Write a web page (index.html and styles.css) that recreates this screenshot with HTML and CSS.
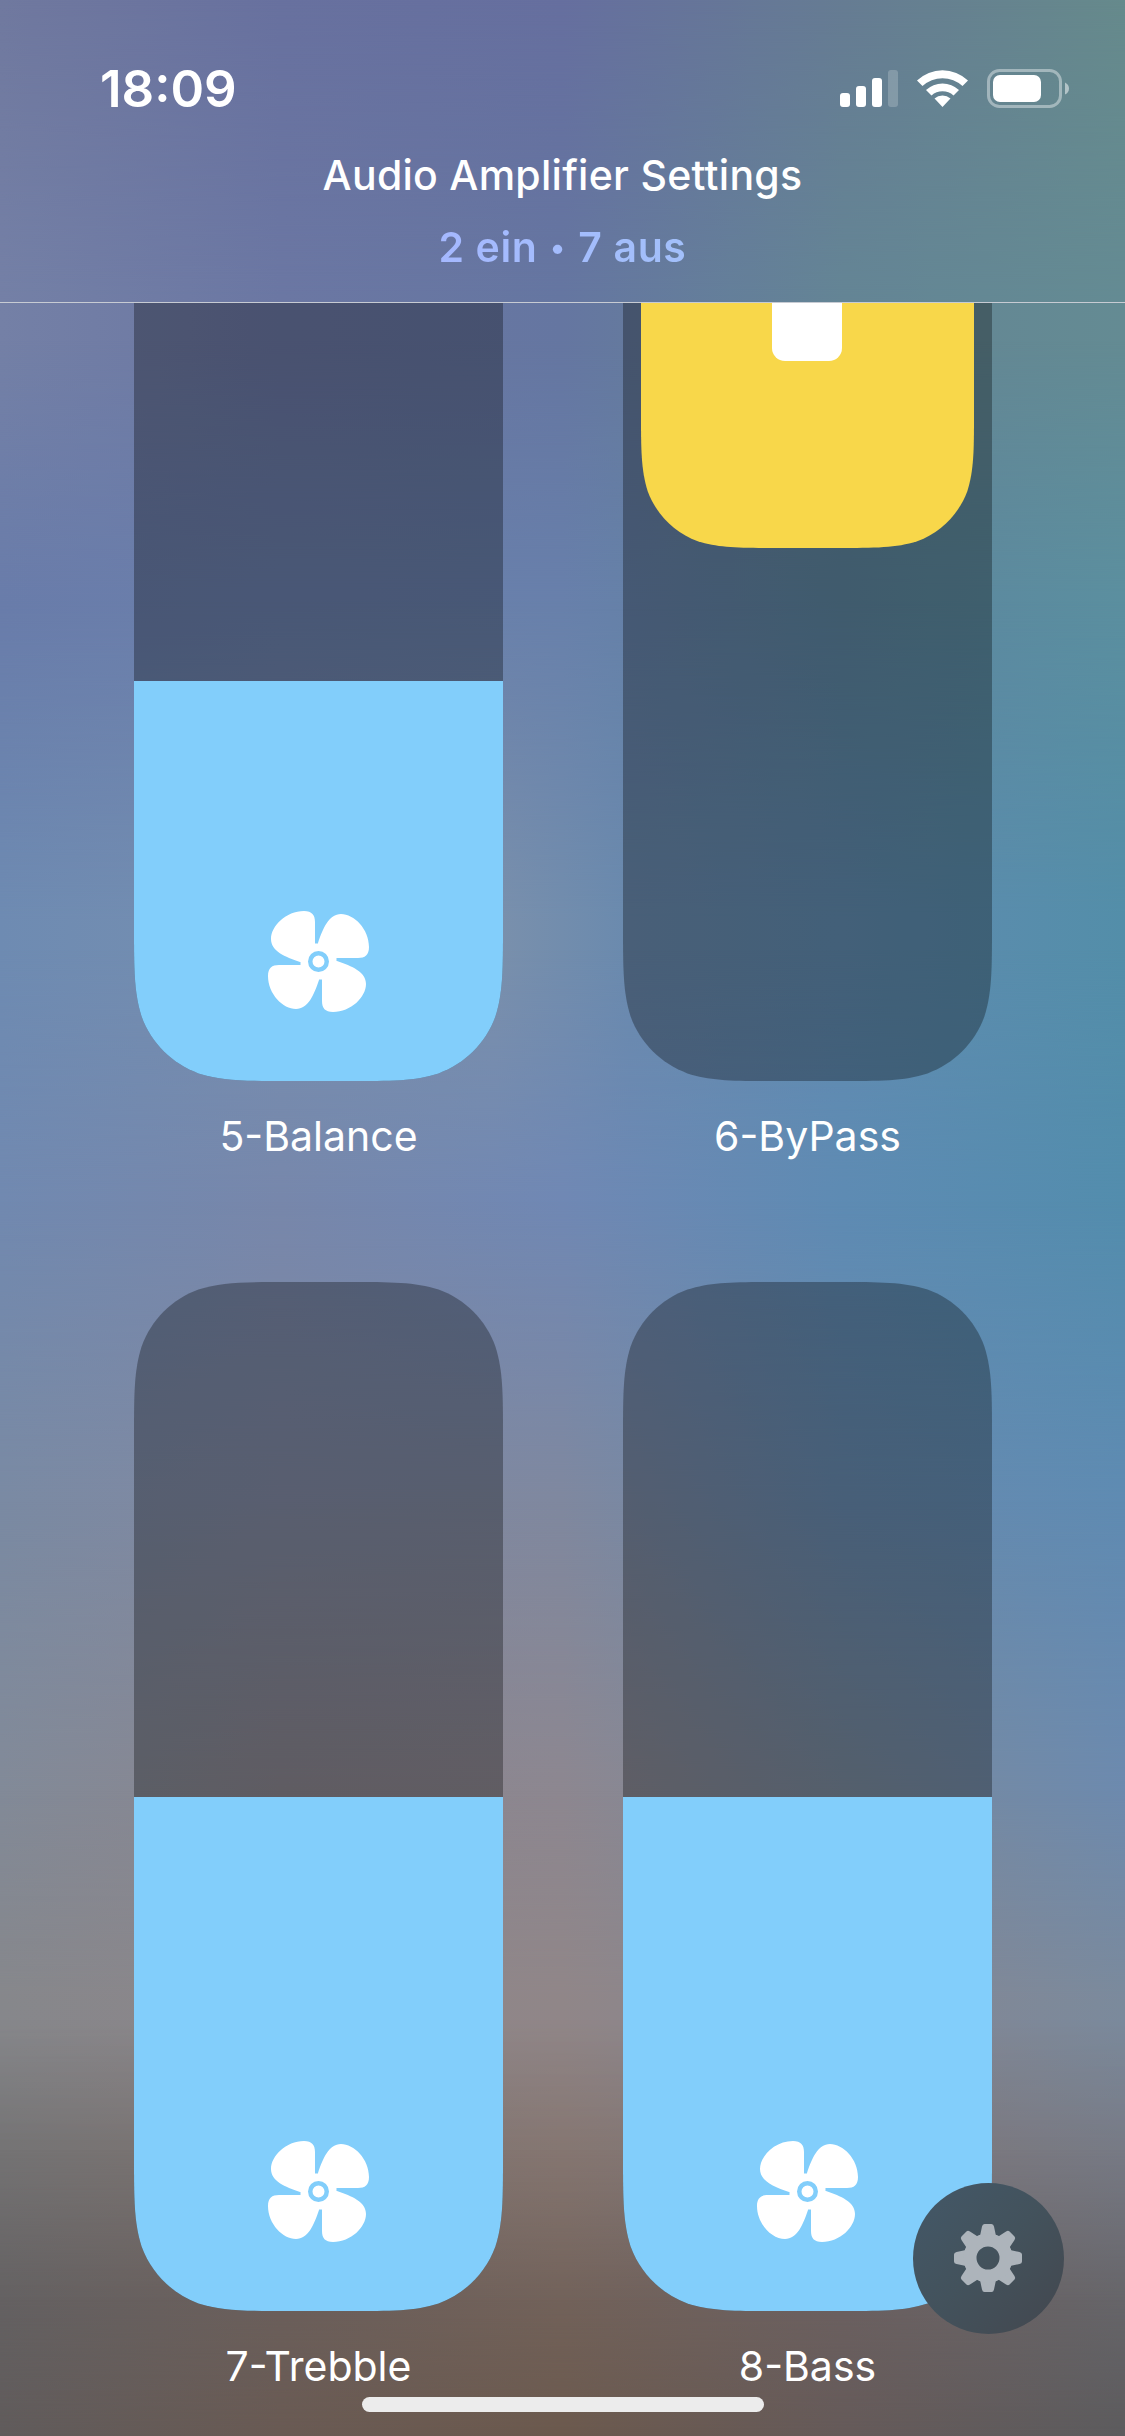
FILE: index.html
```
<!DOCTYPE html>
<html lang="de">
<head>
<meta charset="utf-8">
<title>Audio Amplifier Settings</title>
<link rel="stylesheet" href="styles.css">
</head>
<body>
<svg class="symbols" width="0" height="0" aria-hidden="true">
  <symbol id="fan" viewBox="0 0 102 102">
    <g id="blades">
      <path id="blade" d="M47 34V11C47 4 44 0 36 0C18 0 3 15 3 28C3 40 17 46 32 51H51V32.500H47Z"/>
      <use href="#blade" transform="rotate(90 50.500 50.500)"/>
      <use href="#blade" transform="rotate(180 50.500 50.500)"/>
      <use href="#blade" transform="rotate(270 50.500 50.500)"/>
    </g>
    <circle cx="50.500" cy="50.500" r="8.250" fill="#fff" stroke="#82cefb" stroke-width="4.500"/>
  </symbol>
</svg>
<div class="wallpaper" aria-hidden="true">
  <i class="band b0"></i><i class="band b1"></i><i class="band b2"></i><i class="band b3"></i><i class="band b4"></i><i class="band b5"></i><i class="band b6"></i><i class="band b7"></i><i class="band b8"></i><i class="band b9"></i><i class="band b10"></i>
</div>
<div class="screen">
  <header class="header">
    <div class="status">
      <span class="time">18:09</span>
      <svg class="indicators" width="230" height="40" viewBox="0 0 230 40" fill="#fff">
        <rect x="0" y="24" width="10" height="14" rx="3"/>
        <rect x="16" y="17" width="10" height="21" rx="3"/>
        <rect x="32" y="9" width="10" height="29" rx="3"/>
        <rect x="48" y="1" width="10" height="37" rx="3" opacity=".2"/>
        <path d="M77 11.500A37 37 0 0 1 128 11.500L122.500 17A29.500 29.500 0 0 0 82.500 17Z"/>
        <path d="M86 21A24 24 0 0 1 119 21L113.500 26.500A16.500 16.500 0 0 0 91.500 26.500Z"/>
        <path d="M94.500 29.500A12 12 0 0 1 110.500 29.500L102.500 38Z"/>
        <rect x="148.500" y="1.500" width="72" height="36" rx="11" fill="none" stroke="#fff" stroke-width="3" opacity=".4"/>
        <rect x="153" y="6" width="48" height="27" rx="7"/>
        <path d="M225 13.500Q229 15.500 229 19.500T225 25.500Z" opacity=".5"/>
      </svg>
    </div>
    <h1 class="title">Audio Amplifier Settings</h1>
    <p class="subtitle">2 ein <span class="dot">•</span> 7 aus</p>
  </header>
  <main class="controls">
    <section class="control">
      <div class="tile"><div class="level" style="height:400px"><svg class="fan"><use href="#fan"/></svg></div></div>
      <p class="label">5-Balance</p>
    </section>
    <section class="control">
      <div class="tile switch"><div class="knob"><span class="mark"></span></div></div>
      <p class="label">6-ByPass</p>
    </section>
    <section class="control">
      <div class="tile"><div class="level" style="height:514px"><svg class="fan"><use href="#fan"/></svg></div></div>
      <p class="label">7-Trebble</p>
    </section>
    <section class="control">
      <div class="tile"><div class="level" style="height:514px"><svg class="fan"><use href="#fan"/></svg></div></div>
      <p class="label">8-Bass</p>
    </section>
  </main>
</div>
<button class="settings" aria-label="Settings">
  <svg width="68" height="68" viewBox="-34 -34 68 68" fill="#adb4bb">
    <g id="gear">
      <path id="tooth" d="M-8 -22L-6 -31.500Q-5.500 -34 -3.500 -34H3.500Q5.500 -34 6 -31.500L8 -22Z"/>
      <use href="#tooth" transform="rotate(45)"/><use href="#tooth" transform="rotate(90)"/><use href="#tooth" transform="rotate(135)"/><use href="#tooth" transform="rotate(180)"/><use href="#tooth" transform="rotate(225)"/><use href="#tooth" transform="rotate(270)"/><use href="#tooth" transform="rotate(315)"/>
    </g>
    <circle r="18" fill="none" stroke="#adb4bb" stroke-width="13"/>
  </svg>
</button>
<div class="home-bar"></div>
</body>
</html>
```
FILE: styles.css
```
* { box-sizing: border-box; }
body {
  margin: 0;
  width: 1125px;
  height: 2436px;
  overflow: hidden;
  position: relative;
  font-family: Inter, "Noto Sans", sans-serif;
  color: #fff;
}
h1, p { margin: 0; }
.symbols { position: absolute; }

/* Wallpaper: horizontal colour ramps, each fading into the next one down */
.wallpaper { position: absolute; inset: 0; }
.band {
  position: absolute;
  inset: 0;
  background: linear-gradient(90deg, var(--c));
  -webkit-mask-image: linear-gradient(180deg, transparent var(--from), #000 var(--to));
  mask-image: linear-gradient(180deg, transparent var(--from), #000 var(--to));
}
.b0 { --c: #70799f, #68719f, #666f9f, #667c93, #668a8c; -webkit-mask-image: none; mask-image: none; }
.b1 { --c: #7480a6, #6b77a3, #6576a1, #648595, #648b93; --from: 0px; --to: 300px; }
.b2 { --c: #697caa, #6b7fab, #6880ab, #5d859f, #5b8f9f; --from: 340px; --to: 600px; }
.b3 { --c: #6e8bb2, #768fb0 25%, #7a90ac 44%, #6a8aae 56%, #618bb0 75%, #538ea9; --from: 600px; --to: 920px; }
.b4 { --c: #7189b0, #7787ab, #7088b4, #5e8bb3, #538dad; --from: 950px; --to: 1200px; }
.b5 { --c: #7a8aa3, #8189a2, #7f889f, #688aaf, #5f8bb2; --from: 1200px; --to: 1500px; }
.b6 { --c: #828a98, #8a868f, #8d8790, #7a8a9d, #6d8aae; --from: 1500px; --to: 1790px; }
.b7 { --c: #86878b, #8d868a, #908688, #858692, #7b8a9c; --from: 1790px; --to: 2000px; }
.b8 { --c: #747374, #7d7370, #857671, #7e777a, #777a85; --from: 2020px; --to: 2150px; }
.b9 { --c: #646162, #6b5f5b, #72625a, #6b6060, #666569; --from: 2150px; --to: 2300px; }
.b10 { --c: #605b5b, #695a53, #6b594d, #655a59, #5c5b5d; --from: 2300px; --to: 2436px; }

.screen {
  position: relative;
  height: 100%;
  display: flex;
  flex-direction: column;
}
.header {
  flex: none;
  height: 303px;
  border-bottom: 1px solid #c7cbd3;
  text-align: center;
}
.status {
  display: flex;
  justify-content: space-between;
  padding: 59px 55px 0 100px;
  height: 149px;
}
.status .indicators { margin-top: 10px; }
.time {
  font-size: 51px;
  line-height: 60px;
  font-weight: 600;
}
.title {
  font-size: 41px;
  line-height: 52px;
  font-weight: 500;
  letter-spacing: .27px;
}
.subtitle {
  margin-top: 20px;
  font-size: 41px;
  line-height: 52px;
  font-weight: 600;
  letter-spacing: .6px;
  background: linear-gradient(90deg, #a5b8ff 38%, #a2c0fa 62%);
  -webkit-background-clip: text;
  background-clip: text;
  color: transparent;
}
.dot {
  display: inline-block;
  width: 19px;
  font-size: 30px;
  line-height: 40px;
  vertical-align: 4px;
}

.controls {
  flex: 1;
  overflow: hidden;
  display: grid;
  grid-template-columns: 369px 369px;
  grid-auto-rows: 1230px;
  column-gap: 120px;
  align-content: end;
  padding-left: 134px;
  margin-bottom: -76px;
}
.control { text-align: center; }
.tile {
  height: 1029px;
  display: flex;
  flex-direction: column;
  justify-content: flex-end;
  background: rgba(0, 0, 0, .31);
  clip-path: path("M0 155.900C0 111 0 88.600 7.600 64.400C17.200 38 38 17.200 64.400 7.600C88.600 0 111 0 155.900 0H213.100C258 0 280.400 0 304.600 7.600C331 17.200 351.800 38 361.400 64.400C369 88.600 369 111 369 155.900V873.100C369 918 369 940.400 361.400 964.600C351.800 991 331 1011.800 304.600 1021.400C280.400 1029 258 1029 213.100 1029H155.900C111 1029 88.600 1029 64.400 1021.400C38 1011.800 17.200 991 7.600 964.600C0 940.400 0 918 0 873.100Z");
}
.level {
  display: flex;
  justify-content: center;
  align-items: flex-end;
  padding-bottom: 68px;
  background: #82cefb;
}
.fan { width: 102px; height: 102px; fill: #fff; }
.switch { justify-content: flex-start; padding: 18px; }
.knob {
  height: 478px;
  background: #f8d74a;
  display: flex;
  justify-content: center;
  align-items: flex-end;
  padding: 0 1px 187px 0;
  clip-path: path("M0 0H333V340.400C333 380 333 399.800 326.300 421.200C317.800 444.400 299.400 462.800 276.200 471.300C254.800 478 235 478 195.400 478H137.600C98 478 78.200 478 56.800 471.300C33.600 462.800 15.200 444.400 6.700 421.200C0 399.800 0 380 0 340.400Z");
}
.mark { width: 70px; height: 120px; border-radius: 13px; background: #fff; }
.label {
  margin-top: 29px;
  font-size: 41px;
  line-height: 52px;
}

.settings {
  position: absolute;
  left: 913px;
  top: 2183px;
  width: 151px;
  height: 151px;
  padding: 0 1px 1px 0;
  border: 0;
  border-radius: 50%;
  display: flex;
  align-items: center;
  justify-content: center;
  background: linear-gradient(135deg, #435868 0%, #43525c 50%, #434951 90%);
}
.home-bar {
  position: absolute;
  left: 362px;
  top: 2397px;
  width: 402px;
  height: 15px;
  border-radius: 8px;
  background: #ececec;
}
```
